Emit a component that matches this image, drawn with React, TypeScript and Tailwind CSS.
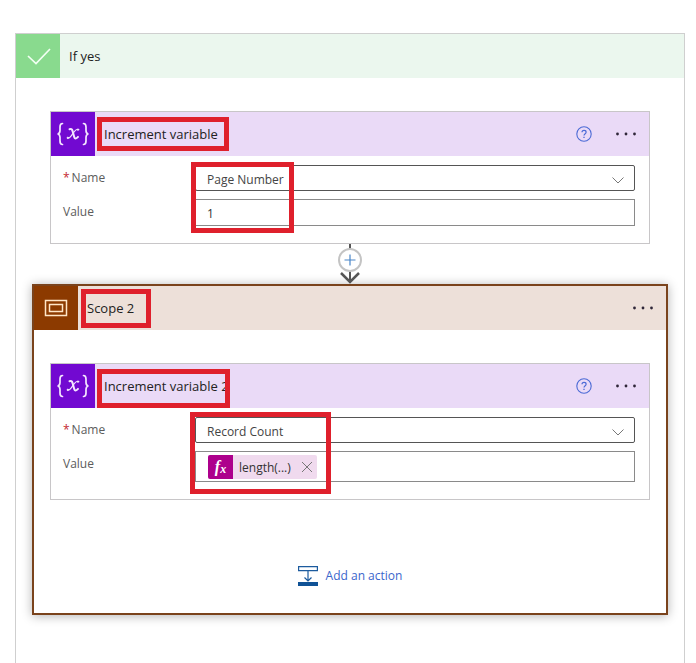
import type { ReactNode } from "react";

function Highlight({ className }: { className: string }) {
  return (
    <span
      aria-hidden="true"
      className={`pointer-events-none absolute z-10 border-[5px] border-[#df202c] ${className}`}
    />
  );
}

function VariableIcon() {
  return (
    <svg
      viewBox="0 0 44 44"
      className="size-11 shrink-0 bg-[#7209d1]"
      fill="none"
      stroke="#f4e6ff"
      strokeLinecap="round"
      aria-hidden="true"
    >
      <path d="M11.500 11.500C9.300 11.500 9 12.800 9 15v3.500c0 2-.6 3.200-2.400 3.500C8.400 22.300 9 23.500 9 25.500V29c0 2.200.3 3.500 2.500 3.500" strokeWidth="1.700" />
      <path d="M32.500 11.500c2.200 0 2.500 1.300 2.500 3.500v3.500c0 2 .6 3.200 2.400 3.500-1.800.3-2.400 1.500-2.400 3.500V29c0 2.200-.3 3.500-2.500 3.500" strokeWidth="1.700" />
      <path d="M18.500 17.200c1.500-.5 2.500 0 3 1.700l1.800 6.300c.5 1.800 2 1.600 3.700-.3" strokeWidth="2" />
      <path d="M27.200 17.300c-1.500-.3-2.800.8-3.800 2.200l-3.600 4.900c-1 1.300-2 2.100-3.300 1.700" strokeWidth="1.200" />
      <circle cx="27" cy="17.700" r=".8" fill="#f4e6ff" strokeWidth=".6" />
      <circle cx="16.800" cy="25.800" r=".8" fill="#f4e6ff" strokeWidth=".6" />
    </svg>
  );
}

function MoreButton() {
  return (
    <button type="button" aria-label="More commands" className="flex h-6 w-6 items-center justify-center">
      <svg viewBox="0 0 24 4" className="h-1 w-6" fill="#2f2638" aria-hidden="true">
        <circle cx="3.500" cy="2" r="1.400" />
        <circle cx="12" cy="2" r="1.400" />
        <circle cx="20.500" cy="2" r="1.400" />
      </svg>
    </button>
  );
}

function HelpButton() {
  return (
    <button type="button" aria-label="Help" className="flex size-4">
      <svg viewBox="0 0 16 16" className="size-4" fill="none" stroke="#4c6bd6" aria-hidden="true">
        <circle cx="8" cy="8" r="7.200" strokeWidth="1.100" />
        <path d="M6 6.300c0-2.600 4.100-2.500 4.100-.1C10.100 7.700 8 7.700 8 9.600" strokeWidth="1.200" />
        <path d="M8 10.700v1.300" strokeWidth="1.300" />
      </svg>
    </button>
  );
}

type VariableCardProps = {
  id: string;
  title: string;
  name: string;
  titleMark: string;
  fieldsMark: string;
  children: ReactNode;
};

function VariableCard({ id, title, name, titleMark, fieldsMark, children }: VariableCardProps) {
  return (
    <article className="border border-[#c8c6c8] bg-white">
      <header className="flex h-11 items-center bg-[#eadaf7] pr-[11px]">
        <VariableIcon />
        <div className="relative flex h-full flex-1 items-center pl-[9px]">
          <h3 className="text-[13px] leading-5 text-[#222]">{title}</h3>
          <Highlight className={titleMark} />
        </div>
        <div className="flex items-center gap-[22px]">
          <HelpButton />
          <MoreButton />
        </div>
      </header>
      <div className="flex pt-[9px] pr-3.5 pb-[17px] pl-3 text-xs">
        <div className="flex w-33 shrink-0 flex-col gap-2 leading-[26px] text-[#5c5c5c]">
          <label htmlFor={`${id}-name`} className="flex gap-[2px]">
            <span className="text-[#c4262e]">*</span>
            Name
          </label>
          <label htmlFor={`${id}-value`}>Value</label>
        </div>
        <div className="relative flex min-w-0 flex-1 flex-col gap-2">
          <div className="relative">
            <select
              id={`${id}-name`}
              defaultValue={name}
              className="block h-[26px] w-full appearance-none rounded-xs border border-[#555] bg-white pt-1 pl-[11px] text-xs text-[#444] outline-none"
            >
              <option>{name}</option>
            </select>
            <svg
              viewBox="0 0 12 7"
              className="pointer-events-none absolute top-3 right-[11px] h-[7px] w-3"
              fill="none"
              stroke="#777"
              aria-hidden="true"
            >
              <path d="M.5.500 6 6l5.500-5.500" />
            </svg>
          </div>
          {children}
          <Highlight className={fieldsMark} />
        </div>
      </div>
    </article>
  );
}

function Connector() {
  return (
    <div className="flex h-10 justify-center">
      <button type="button" aria-label="Insert a new step" className="flex">
        <svg viewBox="0 0 26 40" className="h-10 w-[26px]" fill="none" aria-hidden="true">
          <path d="M13 0v39" stroke="#555" strokeWidth="2" />
          <path d="m4 29 9 9 9-9" stroke="#555" strokeWidth="2.500" />
          <circle cx="13" cy="16" r="11" fill="#fff" stroke="#c4c4c4" strokeWidth="2" />
          <path d="M13 10.500v11M7.500 16h11" stroke="#4a86c8" strokeWidth="1.200" />
        </svg>
      </button>
    </div>
  );
}

export default function App() {
  return (
    <main className="flex min-h-screen flex-col bg-white pt-[33px] pr-[11px] pl-[15px] font-['Open_Sans',sans-serif]">
      <section className="flex-1 border-x border-t border-[#cfcfcf]">
        <header className="flex h-11 items-center bg-[#ebf7ee]">
          <svg viewBox="0 0 44 44" className="size-11 shrink-0 bg-[#89da8e]" fill="none" aria-hidden="true">
            <path d="m12 22 8 7.500L34 15" stroke="#f2fff3" strokeWidth="1.700" />
          </svg>
          <h1 className="pl-[9px] text-[13px] leading-5 text-[#222]">If yes</h1>
        </header>
        <div className="px-4 pt-[33px] pb-12">
          <div className="mx-[18px]">
            <VariableCard
              id="page"
              title="Increment variable"
              name="Page Number"
              titleMark="top-[5px] left-0.5 h-[34px] w-33"
              fieldsMark="-top-[3px] -left-1 h-[71px] w-[103px]"
            >
              <input
                id="page-value"
                defaultValue="1"
                className="block h-[27px] w-full border border-[#8a8a8a] bg-white pt-0.5 pl-[11px] text-xs text-[#333] outline-none"
              />
            </VariableCard>
          </div>
          <Connector />
          <section className="border-2 border-[#7a431c] bg-white shadow-[0_1px_10px_rgba(0,0,0,0.3)]">
            <header className="flex h-11 items-center bg-[#ede0d9] pr-[11px]">
              <svg viewBox="0 0 44 44" className="size-11 shrink-0 bg-[#8c3a00]" fill="none" stroke="#ffe6c8" aria-hidden="true">
                <path d="M11.500 14.500h21v15h-21z" strokeWidth="1.500" />
                <path d="M15.500 18.500h13v7h-13z" strokeWidth="1.500" />
              </svg>
              <div className="relative flex h-full flex-1 items-center pl-[9px]">
                <h2 className="text-[13px] leading-5 text-[#222]">Scope 2</h2>
                <Highlight className="top-[3px] left-[3px] h-[39px] w-[70px]" />
              </div>
              <MoreButton />
            </header>
            <div className="px-4 pt-[33px] pb-6">
              <VariableCard
                id="record"
                title="Increment variable 2"
                name="Record Count"
                titleMark="top-[5px] left-0.5 h-[39px] w-[133px]"
                fieldsMark="-top-[5px] -left-[5px] h-[82px] w-[141px]"
              >
                <div className="flex h-[31px] items-center border border-[#8a8a8a] bg-white pl-3">
                  <output
                    id="record-value"
                    className="flex h-6 items-center rounded-xs bg-[#f0daee] pr-1 text-[#333]"
                  >
                    <span className="flex h-6 w-[25px] items-center justify-center rounded-l-xs bg-[#ad008c] font-['Liberation_Serif',serif] text-base font-bold text-white italic">
                      f<span className="pt-1 text-xs">x</span>
                    </span>
                    <span className="pt-0.5 pr-2.5 pl-1.5">length(...)</span>
                    <button type="button" aria-label="Remove length" className="flex">
                      <svg viewBox="0 0 12 12" className="size-3" stroke="#777" aria-hidden="true">
                        <path d="m1 1 10 10M11 1 1 11" />
                      </svg>
                    </button>
                  </output>
                </div>
              </VariableCard>
              <div className="flex justify-center pt-[63px]">
                <button type="button" className="flex h-[26px] items-center gap-2 text-xs text-[#3a66cc]">
                  <svg viewBox="0 0 20 20" className="size-5" fill="none" stroke="#1c5b9e" aria-hidden="true">
                    <path d="M.6.600h18.800v4H.6z" strokeWidth="1.200" />
                    <path d="M10 5v10M6.500 11.500 10 15l3.500-3.500" strokeWidth="1.200" />
                    <path d="M0 16h20v4H0z" fill="#0f5296" stroke="none" />
                  </svg>
                  Add an action
                </button>
              </div>
            </div>
          </section>
        </div>
      </section>
    </main>
  );
}
